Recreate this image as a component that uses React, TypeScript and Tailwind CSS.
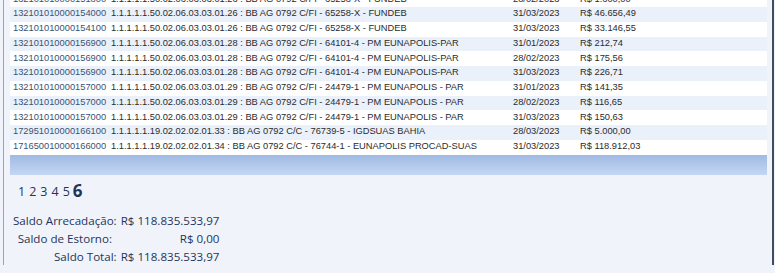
const rows = [
  ["132101010000151800", "1.1.1.1.1.50.02.06.03.03.01.26 : BB AG 0792 C/FI - 65258-X - FUNDEB", "28/02/2023", "R$ 1.600,00"],
  ["132101010000154000", "1.1.1.1.1.50.02.06.03.03.01.26 : BB AG 0792 C/FI - 65258-X - FUNDEB", "31/03/2023", "R$ 46.656,49"],
  ["132101010000154100", "1.1.1.1.1.50.02.06.03.03.01.26 : BB AG 0792 C/FI - 65258-X - FUNDEB", "31/03/2023", "R$ 33.146,55"],
  ["132101010000156900", "1.1.1.1.1.50.02.06.03.03.01.28 : BB AG 0792 C/FI - 64101-4 - PM EUNAPOLIS-PAR", "31/01/2023", "R$ 212,74"],
  ["132101010000156900", "1.1.1.1.1.50.02.06.03.03.01.28 : BB AG 0792 C/FI - 64101-4 - PM EUNAPOLIS-PAR", "28/02/2023", "R$ 175,56"],
  ["132101010000156900", "1.1.1.1.1.50.02.06.03.03.01.28 : BB AG 0792 C/FI - 64101-4 - PM EUNAPOLIS-PAR", "31/03/2023", "R$ 226,71"],
  ["132101010000157000", "1.1.1.1.1.50.02.06.03.03.01.29 : BB AG 0792 C/FI - 24479-1 - PM EUNAPOLIS - PAR", "31/01/2023", "R$ 141,35"],
  ["132101010000157000", "1.1.1.1.1.50.02.06.03.03.01.29 : BB AG 0792 C/FI - 24479-1 - PM EUNAPOLIS - PAR", "28/02/2023", "R$ 116,65"],
  ["132101010000157000", "1.1.1.1.1.50.02.06.03.03.01.29 : BB AG 0792 C/FI - 24479-1 - PM EUNAPOLIS - PAR", "31/03/2023", "R$ 150,63"],
  ["172951010000166100", "1.1.1.1.1.19.02.02.02.01.33 : BB AG 0792 C/C - 76739-5 - IGDSUAS BAHIA", "28/03/2023", "R$ 5.000,00"],
  ["171650010000166000", "1.1.1.1.1.19.02.02.02.01.34 : BB AG 0792 C/C - 76744-1 - EUNAPOLIS PROCAD-SUAS", "31/03/2023", "R$ 118.912,03"],
];

export default function App() {
  return (
    <div className="h-[273px] w-[775px] overflow-hidden bg-[#f1f3fb]">
      <div className="ml-[3px] mr-[1px] h-full border-l border-r-2 border-l-[#98a4b8] border-r-[#3f4b5e] pl-[6px] pr-[5px]">
        {/* grid */}
        <div className="mt-[-7.75px] text-[9.3px] text-[#2b2b2b]" style={{ fontFamily: '"Liberation Sans", Arial, sans-serif' }}>
          {rows.map((r, i) => (
            <div key={i} className={`flex h-[14.75px] items-center ${i % 2 === 1 ? "bg-[#eaf1fb]" : "bg-white"}`}>
              <div className="w-[101px] shrink-0 pl-[3px] text-[#3a5272]">{r[0]}</div>
              <div className="w-[402px] shrink-0 whitespace-nowrap">{r[1]}</div>
              <div className="w-[67px] shrink-0">{r[2]}</div>
              <div className="whitespace-nowrap">{r[3]}</div>
            </div>
          ))}
          <div className="mt-[0.5px] h-[20px] bg-gradient-to-b from-[#a0bae3] to-[#c4d7f4]" />
        </div>

        <div className="text-[#1f3559]" style={{ fontFamily: '"Open Sans", "Noto Sans", sans-serif' }}>
          <div className="mt-[8px] flex items-end pl-[8px] leading-none">
            <span className="mr-[4px] text-[12.5px]">1</span>
            <span className="mr-[4px] text-[12.5px]">2</span>
            <span className="mr-[4px] text-[12.5px]">3</span>
            <span className="mr-[4px] text-[12.5px]">4</span>
            <span className="mr-[3px] text-[12.5px]">5</span>
            <span className="text-[17px] font-bold leading-[15px]">6</span>
          </div>

          <table className="mt-[14px] ml-[3px] border-collapse text-[11.6px]">
            <tbody>
              <tr className="h-[18px]">
                <td className="pr-[4px] text-right">Saldo Arrecadação:</td>
                <td className="text-right">R$ 118.835.533,97</td>
              </tr>
              <tr className="h-[18px]">
                <td className="pr-[4px] text-center">Saldo de Estorno:</td>
                <td className="text-right">R$ 0,00</td>
              </tr>
              <tr className="h-[18px]">
                <td className="pr-[4px] text-right">Saldo Total:</td>
                <td className="text-right">R$ 118.835.533,97</td>
              </tr>
            </tbody>
          </table>
        </div>
      </div>
    </div>
  );
}
